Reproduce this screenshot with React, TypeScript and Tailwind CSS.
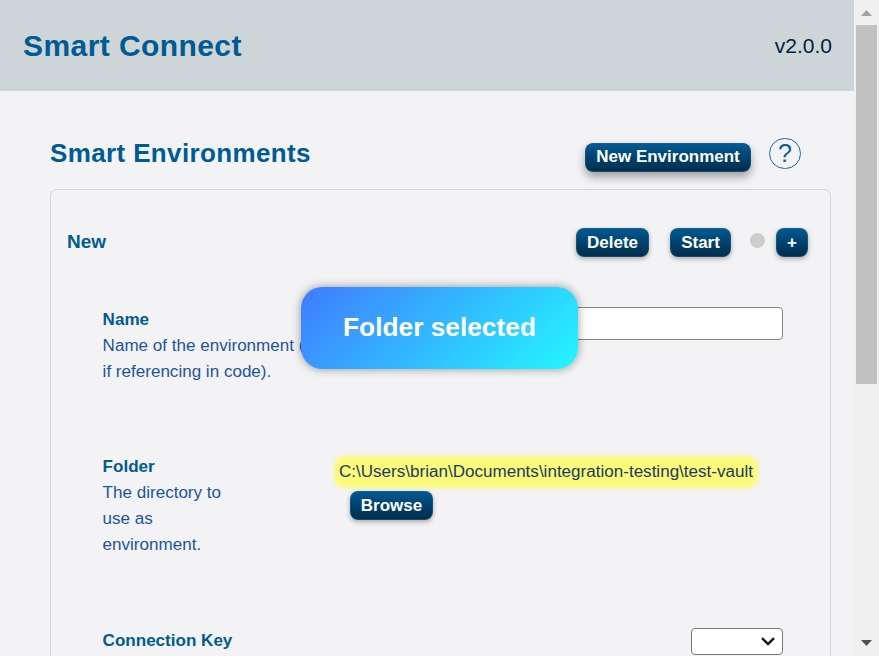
import type { ReactNode } from "react";

function Button({ children, className = "" }: { children: ReactNode; className?: string }) {
  return (
    <button
      className={`h-[29px] shrink-0 rounded-[8px] border border-[#2a6488]/50 bg-linear-to-b from-[#005b94] to-[#002c4b] bg-origin-border text-[17px] leading-[26px] font-bold whitespace-nowrap text-white ${className}`}
    >
      {children}
    </button>
  );
}

function Setting({ name, children }: { name: string; children?: ReactNode }) {
  return (
    <div className="text-[17.06px] leading-[25.9px] whitespace-nowrap text-[#1d54a0]">
      <h3 className="font-bold text-[#005b8f]">{name}</h3>
      {children}
    </div>
  );
}

function Scrollbar() {
  return (
    <div className="flex h-full w-[25px] shrink-0 flex-col items-center bg-[#f0f0f0]">
      <div className="flex h-[25px] items-center">
        <svg width="11" height="6" viewBox="0 0 11 6" className="mt-px" fill="#a3a3a3">
          <path d="M0 6L5.5 0L11 6Z" />
        </svg>
      </div>
      <div className="h-[359px] w-[21px] bg-[#c1c1c1]" />
      <div className="flex-1" />
      <svg width="11" height="6" viewBox="0 0 11 6" className="mb-[10px]" fill="#505050">
        <path d="M0 0H11L5.5 6Z" />
      </svg>
    </div>
  );
}

export default function App() {
  return (
    <div className="relative flex h-[656px] w-[879px] overflow-hidden bg-[#f3f3f6] font-['Liberation_Sans',Arial,sans-serif]">
      <main className="flex h-full w-[854px] flex-col">
        <header className="flex h-[91px] shrink-0 items-center justify-between bg-[#cdd5d8] pr-[22px] pl-[23px]">
          <h1 className="text-[30px] font-bold tracking-[0.42px] text-[#005b94]">Smart Connect</h1>
          <span className="text-[21px] text-[#001e38]">v2.0.0</span>
        </header>

        <div className="flex h-[98px] shrink-0 items-start pt-[46px] pr-[53px] pl-[50px]">
          <h2 className="flex-1 text-[26px] leading-8 font-bold tracking-[0.37px] text-[#005b94]">Smart Environments</h2>
          <Button className="mt-[6px] mr-[18px] w-[166px] pb-[2px] leading-6 shadow-[0_5px_10px_rgba(0,0,0,0.35)]">
            New Environment
          </Button>
          <div className="mt-px flex h-[31px] w-8 items-center justify-center rounded-full border border-[#1c6a9c] text-[25px] text-[#0a5f95]">
            ?
          </div>
        </div>

        <section className="mr-[23px] ml-[50px] flex h-[600px] shrink-0 flex-col rounded-t-[7px] border border-[#d5d6d8] px-[17px]">
          <div className="mt-[38px] flex h-[30px] shrink-0 items-start pr-[5px]">
            <h3 className="-ml-px flex-1 text-[19px] leading-7 font-bold text-[#005b8f]">New</h3>
            <Button className="mr-[21px] w-[73px] shadow-[0_2px_5px_rgba(0,0,0,0.3)]">Delete</Button>
            <Button className="mr-[19px] w-[61px] shadow-[0_2px_5px_rgba(0,0,0,0.3)]">Start</Button>
            <div className="mt-[5px] mr-[11px] size-[15px] rounded-full bg-[#cccccc]" />
            <Button className="w-8 shadow-[0_2px_5px_rgba(0,0,0,0.3)]">+</Button>
          </div>

          <div className="flex h-[147px] shrink-0 items-start justify-between pt-[49px] pr-[30px] pl-[34.6px]">
            <Setting name="Name">
              <p>
                Name of the environment (used
                <br />
                if referencing in code).
              </p>
            </Setting>
            <input className="h-[33px] w-[280px] shrink-0 rounded-[4px] border border-[#858585] bg-white" />
          </div>

          <div className="flex h-[174px] shrink-0 items-start pt-[49px] pl-[34.6px]">
            <div className="w-[235.4px]">
              <Setting name="Folder">
                <p>
                  The directory to
                  <br />
                  use as
                  <br />
                  environment.
                </p>
              </Setting>
            </div>
            <div className="flex flex-col items-start pt-[6px]">
              <span className="rounded-[7px] bg-[#fbfb79] px-px text-[17.06px] leading-6 text-[#1a3a60] shadow-[0_0_4px_4px_#fbfb79]">
                C:\Users\brian\Documents\integration-testing\test-vault
              </span>
              <Button className="mt-[7px] ml-3 w-[83px] shadow-[0_2px_5px_rgba(0,0,0,0.3)]">Browse</Button>
            </div>
          </div>

          <div className="flex items-start justify-between pt-[49px] pr-[30px] pl-[34.6px]">
            <Setting name="Connection Key" />
            <div className="flex h-[27px] w-[92px] items-center justify-end rounded-[4px] border border-[#777] bg-white pr-[7px]">
              <svg width="14" height="9" viewBox="0 0 14 9" fill="none" stroke="#111" strokeWidth="2.4">
                <path d="M1 1.2L7 7L13 1.2" />
              </svg>
            </div>
          </div>
        </section>
      </main>
      <Scrollbar />
      <div className="absolute top-[287px] left-[301px] flex h-[82px] w-[277px] items-center justify-center rounded-[21px] bg-[linear-gradient(135deg,#407bff,#24f7ff)] pb-px text-[26.3px] font-bold text-white shadow-[0_0_10px_rgba(0,0,0,0.4)]">
        Folder selected
      </div>
    </div>
  );
}
